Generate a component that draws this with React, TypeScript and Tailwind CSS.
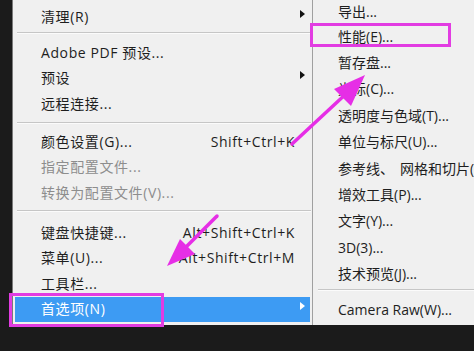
import React from "react";

type Item =
  | { kind: "row"; t: string; sc?: string; arrow?: boolean; dis?: boolean; hl?: boolean }
  | { kind: "sep"; h: number; top: number };

const main: Item[] = [
  { kind: "row", t: "清理(R)", arrow: true },
  { kind: "sep", h: 10.5, top: 2.5 },
  { kind: "row", t: "Adobe PDF 预设..." },
  { kind: "row", t: "预设", arrow: true },
  { kind: "row", t: "远程连接..." },
  { kind: "sep", h: 12.5, top: 5.5 },
  { kind: "row", t: "颜色设置(G)...", sc: "Shift+Ctrl+K" },
  { kind: "row", t: "指定配置文件...", dis: true },
  { kind: "row", t: "转换为配置文件(V)...", dis: true },
  { kind: "sep", h: 14.5, top: 4.5 },
  { kind: "row", t: "键盘快捷键...", sc: "Alt+Shift+Ctrl+K" },
  { kind: "row", t: "菜单(U)...", sc: "Alt+Shift+Ctrl+M" },
  { kind: "row", t: "工具栏..." },
  { kind: "row", t: "首选项(N)", arrow: true, hl: true },
];

const sub = [
  "性能(E)...",
  "暂存盘...",
  "光标(C)...",
  "透明度与色域(T)...",
  "单位与标尺(U)...",
  "GUIDES",
  "增效工具(P)...",
  "文字(Y)...",
  "3D(3)...",
  "技术预览(J)...",
];

const font = { fontFamily: '"Open Sans", "Noto Sans CJK SC", sans-serif' };

function Tri({ white }: { white?: boolean }) {
  return (
    <svg width="5" height="8" viewBox="0 0 5 8" className="mb-[6px] shrink-0">
      <path d="M0 0 L5 4 L0 8 Z" fill={white ? "#ffffff" : "#111111"} />
    </svg>
  );
}

export default function App() {
  return (
    <div
      className="relative w-[474px] h-[351px] overflow-hidden bg-[#1b1b1b] flex items-start text-[14px] leading-none"
      style={font}
    >
      <div className="w-[12px] shrink-0" />
      {/* main menu */}
      <div className="w-[301px] h-[325px] shrink-0 bg-[#f0f0f0] border-l border-[#7a7a7a] border-r border-r-[#a0a0a0] pt-[4px] flex flex-col tracking-[0.6px]">
        {main.map((it, i) =>
          it.kind === "sep" ? (
            <div key={i} className="shrink-0 pl-[4px] pr-[1px]" style={{ height: it.h, paddingTop: it.top }}>
              <div className="h-[1px] bg-[#c6c6c6]" />
              <div className="h-[1px] bg-[#fbfbfb]" />
            </div>
          ) : (
            <div
              key={i}
              className={
                "h-[25.5px] shrink-0 mx-[2px] flex items-center pl-[26px] pr-[5px] " +
                (it.hl ? "bg-[#3d9bf3] text-white" : it.dis ? "text-[#8d8d8d]" : "text-[#1e1e1e]")
              }
            >
              <span className="whitespace-nowrap">{it.t}</span>
              <span className="flex-1" />
              {it.sc && <span className="whitespace-nowrap mr-[5px]">{it.sc}</span>}
              {it.arrow ? <Tri white={it.hl} /> : <span className="w-[5px]" />}
            </div>
          )
        )}
      </div>
      {/* submenu */}
      <div className="flex-1 min-w-0 h-[325px] bg-[#f0f0f0] flex flex-col text-[#1e1e1e] overflow-hidden">
        <div className="h-[23.5px] shrink-0 flex items-center pl-[25px] whitespace-nowrap">导出...</div>
        {sub.map((s) => (
          <div key={s} className="h-[26.4px] shrink-0 flex items-center pl-[25px] whitespace-nowrap">
            {s === "GUIDES" ? (
              <>
                <span className="mr-[6px]">参考线、</span>
                <span>网格和切片(S)...</span>
              </>
            ) : (
              s
            )}
          </div>
        ))}
        <div className="h-[9.5px] shrink-0 pt-[1.5px] pl-[5px]">
          <div className="h-[1px] bg-[#c6c6c6]" />
          <div className="h-[1px] bg-[#fbfbfb]" />
        </div>
        <div className="h-[26px] shrink-0 flex items-center pl-[25px] whitespace-nowrap">Camera Raw(W)...</div>
      </div>

      {/* annotation boxes */}
      <div className="absolute left-[9px] top-[293px] w-[155px] h-[34px] border-[3px] border-[#e23ce2]" />
      <div className="absolute left-[310px] top-[23px] w-[141px] h-[24px] border-[3px] border-[#e23ce2]" />

      {/* annotation arrows */}
      <svg className="absolute left-0 top-0" width="474" height="351" viewBox="0 0 474 351">
        <line x1="292" y1="144" x2="348" y2="92" stroke="#e62ee6" strokeWidth="3.5" strokeLinecap="round" />
        <polygon points="365,75 334,89 351,106" fill="#e62ee6" />
        <line x1="217" y1="216" x2="186" y2="247" stroke="#e62ee6" strokeWidth="3.5" strokeLinecap="round" />
        <polygon points="167,266 180,239 195,254" fill="#e62ee6" />
      </svg>
    </div>
  );
}
